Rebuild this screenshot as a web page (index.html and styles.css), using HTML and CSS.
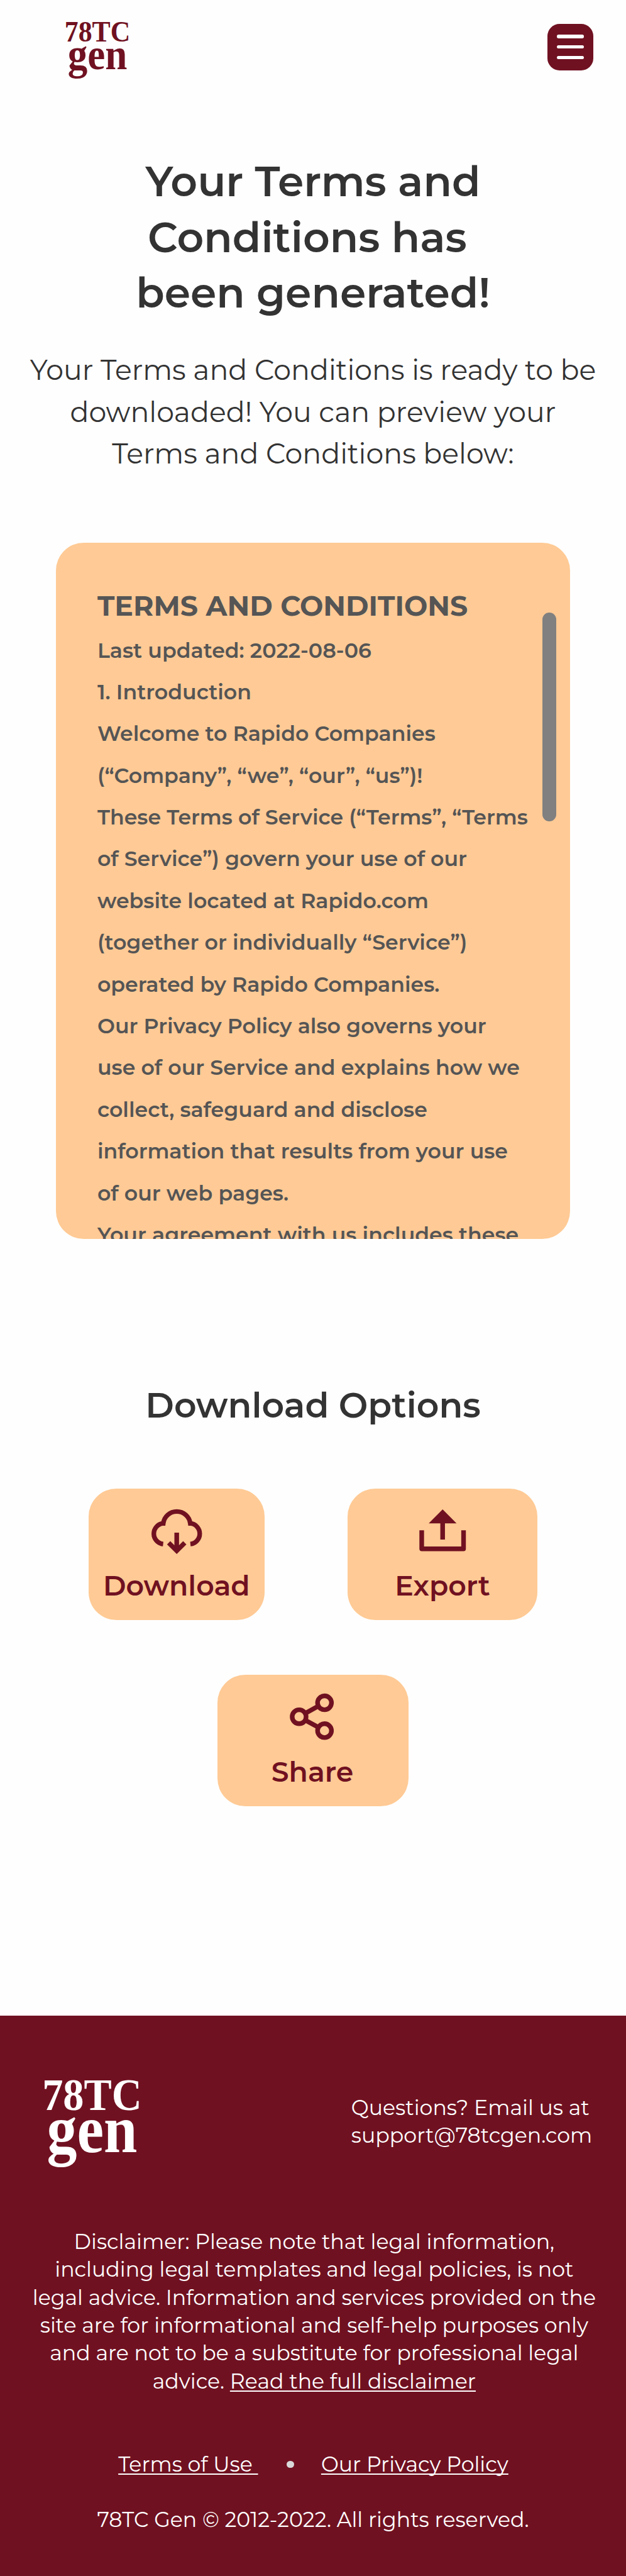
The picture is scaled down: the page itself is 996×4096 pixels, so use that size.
FILE: index.html
```html
<!DOCTYPE html>
<html lang="en">
<head>
<meta charset="utf-8">
<title>78TC gen – Terms and Conditions</title>
<link rel="stylesheet" href="styles.css">
</head>
<body>
<header class="header">
  <svg class="logo" viewBox="15 16 168 150" role="img" aria-label="78TC gen">
    <text class="logo-top" x="13" y="69.5" textLength="172" lengthAdjust="spacingAndGlyphs">78TC</text>
    <text class="logo-bottom" x="21" y="142" textLength="156" lengthAdjust="spacingAndGlyphs">gen</text>
  </svg>
  <button class="menu" aria-label="Menu"><i></i><i></i><i></i></button>
</header>
<main class="main">
  <h1 class="title"><span>Your Terms and</span><span>Conditions has&nbsp;</span><span>been generated!</span></h1>
  <p class="lead"><span>Your Terms and Conditions is ready to be</span><span>downloaded! You can preview your</span><span>Terms and Conditions below:</span></p>
  <section class="preview">
    <h2 class="preview-title">TERMS AND CONDITIONS</h2>
    <div class="preview-body">
      <span>Last updated: 2022-08-06</span>
      <span>1. Introduction</span>
      <span>Welcome to Rapido Companies</span>
      <span>(“Company”, “we”, “our”, “us”)!</span>
      <span>These Terms of Service (“Terms”, “Terms</span>
      <span>of Service”) govern your use of our</span>
      <span>website located at Rapido.com</span>
      <span>(together or individually “Service”)</span>
      <span>operated by Rapido Companies.</span>
      <span>Our Privacy Policy also governs your</span>
      <span>use of our Service and explains how we</span>
      <span>collect, safeguard and disclose</span>
      <span>information that results from your use</span>
      <span>of our web pages.</span>
      <span>Your agreement with us includes these</span>
    </div>
    <div class="scrollbar"></div>
  </section>
  <h2 class="options-title">Download Options</h2>
  <div class="options">
    <button class="option option-download">
      <svg class="icon" viewBox="6.5 2 96 96"><path d="M31 73.8A18 18 0 0 1 31 38h.2A23.5 23.5 0 0 1 77.8 38h.2A18 18 0 0 1 78 73.8M54.4 54V84M40.5 71.5L54.4 85.3L68.3 71.5"/></svg>
      <span class="label">Download</span>
    </button>
    <button class="option option-export">
      <svg class="icon" viewBox="5.5 2 96 96"><path stroke-linejoin="round" d="M17.4 50V82H89.6V50"/><path d="M53.5 66V34"/><path class="solid" d="M53.5 14L77.5 38H29.5Z"/></svg>
      <span class="label">Export</span>
    </button>
    <button class="option option-share">
      <svg class="icon" viewBox="0 0 96 96"><circle cx="23.8" cy="48.5" r="12"/><circle cx="67.6" cy="24.5" r="12"/><circle cx="67.6" cy="72.5" r="12"/><path d="M34.5 42.5L57 30.2M34.5 54.5L57 66.8"/></svg>
      <span class="label">Share</span>
    </button>
  </div>
</main>
<footer class="footer">
  <div class="footer-top">
    <svg class="logo" viewBox="15 16 168 150" role="img" aria-label="78TC gen">
      <text class="logo-top" x="13" y="69.5" textLength="172" lengthAdjust="spacingAndGlyphs">78TC</text>
      <text class="logo-bottom" x="21" y="142" textLength="156" lengthAdjust="spacingAndGlyphs">gen</text>
    </svg>
    <p class="contact"><span>Questions? Email us at</span><span>support@78tcgen.com</span></p>
  </div>
  <p class="disclaimer"><span>Disclaimer: Please note that legal information,</span><span>including legal templates and legal policies, is not</span><span>legal advice. Information and services provided on the</span><span>site are for informational and self-help purposes only</span><span>and are not to be a substitute for professional legal</span><span>advice. <a href="#">Read the full disclaimer</a></span></p>
  <nav class="links">
    <a class="terms" href="#">Terms of Use&nbsp;</a>
    <i class="dot"></i>
    <a class="privacy" href="#">Our Privacy Policy</a>
  </nav>
  <p class="copyright">78TC Gen © 2012-2022. All rights reserved.</p>
</footer>
</body>
</html>
```

FILE: styles.css
```css
html { font-size: 9.222px; }
* { box-sizing: border-box; }
body {
  margin: 0;
  height: 4096px;
  overflow: hidden;
  display: flex;
  flex-direction: column;
  background: #fefefe;
  color: #333;
  font-family: Montserrat, Inter, sans-serif;
}
h1, h2, p { margin: 0; }
button { border: 0; padding: 0; font: inherit; }
h1 span, p span, .preview-body span { display: block; white-space: nowrap; }

/* Logo */
.logo { display: block; fill: #701121; overflow: visible; }
.logo text { font-family: "Liberation Serif", serif; font-weight: 700; }
.logo-top { font-size: 78px; }
.logo-bottom { font-size: 116px; }

/* Header */
.header {
  display: flex;
  justify-content: space-between;
  align-items: flex-start;
  height: 26.6rem;
  padding: 3.6rem 5.6rem 0 11.3rem;
}
.header .logo { width: 11.06rem; height: 9.88rem; }
.menu {
  display: flex;
  flex-direction: column;
  align-items: center;
  justify-content: center;
  gap: 1.2rem;
  width: 8rem;
  height: 8rem;
  margin-top: .5rem;
  border-radius: 2.1rem;
  background: #701121;
}
.menu i { width: 4.6rem; height: .6rem; border-radius: .3rem; background: #fff; }

/* Intro */
.title { font-size: 7.2rem; line-height: 9.6rem; font-weight: 600; text-align: center; }
.lead { margin-top: 4.8rem; font-size: 4.8rem; line-height: 7.2rem; text-align: center; }

/* Document preview */
.preview {
  position: relative;
  width: 88.8rem;
  height: 120rem;
  margin: 11.8rem auto 0;
  padding: 7.3rem 7.2rem 0;
  overflow: hidden;
  border-radius: 4.8rem;
  background: #ffca95;
  color: #555;
}
.preview-title { font-size: 4.8rem; line-height: 7.2rem; font-weight: 700; white-space: nowrap; }
.preview-body { margin-top: .4rem; font-size: 3.6rem; line-height: 7.2rem; font-weight: 600; }
.scrollbar {
  position: absolute;
  top: 12rem;
  right: 2.4rem;
  width: 2.4rem;
  height: 36rem;
  border-radius: 1.2rem;
  background: #808080;
}

/* Download options */
.options-title {
  margin-top: 25.1rem;
  font-size: 6rem;
  line-height: 7.2rem;
  font-weight: 600;
  text-align: center;
}
.options {
  display: flex;
  flex-wrap: wrap;
  justify-content: center;
  gap: 9.5rem 14.4rem;
  margin-top: 10.8rem;
}
.option {
  display: flex;
  flex-direction: column;
  align-items: center;
  height: 22.6rem;
  padding-top: 2.4rem;
  border-radius: 4.8rem;
  background: #ffca95;
  color: #701121;
}
.option-download { width: 30.3rem; }
.option-export { width: 32.7rem; }
.option-share { width: 33rem; }
.option-share .label { padding-right: .2rem; }
.icon { width: 9.6rem; height: 9.6rem; fill: none; stroke: #701121; stroke-width: 8; }
.icon .solid { fill: #701121; stroke: none; }
.label { margin-top: 1.7rem; font-size: 4.8rem; line-height: 6rem; font-weight: 600; }

/* Footer */
.footer {
  height: 96.6rem;
  margin-top: auto;
  padding-top: 10.9rem;
  background: #701121;
  color: #fff;
  font-size: 3.6rem;
  line-height: 4.8rem;
}
.footer a { color: inherit; text-decoration: underline 2px; text-underline-offset: .1em; text-decoration-skip-ink: none; }
.footer .logo { width: 16.8rem; height: 15rem; fill: #fff; }
.footer-top { display: flex; padding-left: 7.5rem; }
.contact { margin: 2.5rem 0 0 36.3rem; }
.disclaimer { margin-top: 10.65rem; padding-left: .4rem; text-align: center; }
.links { display: flex; align-items: center; margin-top: 9.6rem; padding-left: 20.4rem; }
.links a { display: block; white-space: nowrap; }
.terms { width: 24.1rem; }
.dot { width: 1.2rem; height: 1.2rem; margin: 0 4.7rem 0 5rem; border-radius: 50%; background: #d9d9d9; }
.copyright { margin-top: 4.7rem; text-align: center; }
```
